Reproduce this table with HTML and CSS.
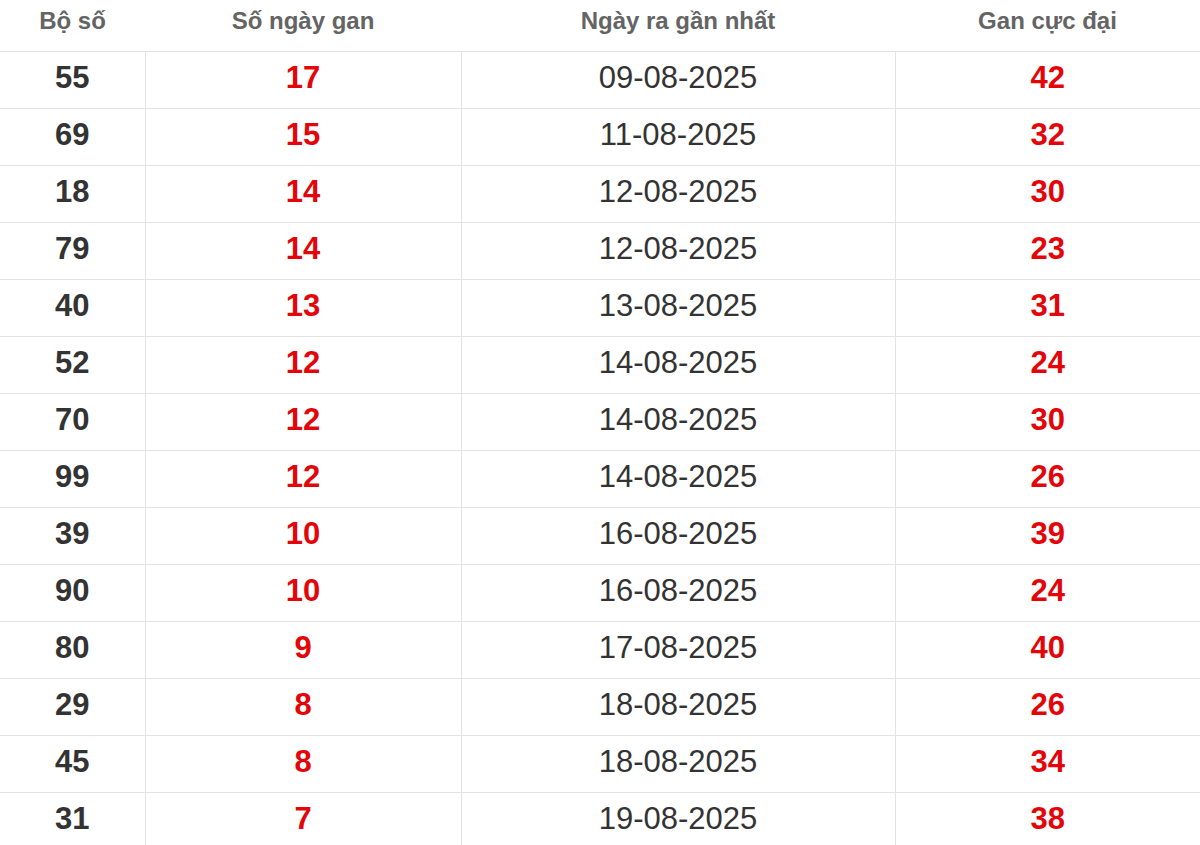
FILE: index.html
```html
<!DOCTYPE html>
<html lang="vi">
<head>
<meta charset="utf-8">
<link rel="stylesheet" href="styles.css">
</head>
<body>
<table class="gan-table">
  <colgroup>
    <col class="c1"><col class="c2"><col class="c3"><col class="c4">
  </colgroup>
  <thead>
    <tr><th>Bộ số</th><th>Số ngày gan</th><th>Ngày ra gần nhất</th><th>Gan cực đại</th></tr>
  </thead>
  <tbody>
    <tr><td class="num">55</td><td class="red">17</td><td class="date">09-08-2025</td><td class="red">42</td></tr>
    <tr><td class="num">69</td><td class="red">15</td><td class="date">11-08-2025</td><td class="red">32</td></tr>
    <tr><td class="num">18</td><td class="red">14</td><td class="date">12-08-2025</td><td class="red">30</td></tr>
    <tr><td class="num">79</td><td class="red">14</td><td class="date">12-08-2025</td><td class="red">23</td></tr>
    <tr><td class="num">40</td><td class="red">13</td><td class="date">13-08-2025</td><td class="red">31</td></tr>
    <tr><td class="num">52</td><td class="red">12</td><td class="date">14-08-2025</td><td class="red">24</td></tr>
    <tr><td class="num">70</td><td class="red">12</td><td class="date">14-08-2025</td><td class="red">30</td></tr>
    <tr><td class="num">99</td><td class="red">12</td><td class="date">14-08-2025</td><td class="red">26</td></tr>
    <tr><td class="num">39</td><td class="red">10</td><td class="date">16-08-2025</td><td class="red">39</td></tr>
    <tr><td class="num">90</td><td class="red">10</td><td class="date">16-08-2025</td><td class="red">24</td></tr>
    <tr><td class="num">80</td><td class="red">9</td><td class="date">17-08-2025</td><td class="red">40</td></tr>
    <tr><td class="num">29</td><td class="red">8</td><td class="date">18-08-2025</td><td class="red">26</td></tr>
    <tr><td class="num">45</td><td class="red">8</td><td class="date">18-08-2025</td><td class="red">34</td></tr>
    <tr><td class="num">31</td><td class="red">7</td><td class="date">19-08-2025</td><td class="red">38</td></tr>
  </tbody>
</table>
</body>
</html>
```

FILE: styles.css
```css
html, body {
  margin: 0;
  padding: 0;
  background: #fff;
}
body {
  font-family: "Liberation Sans", Arial, sans-serif;
  overflow: hidden;
}
.gan-table {
  width: 1200px;
  border-collapse: collapse;
  table-layout: fixed;
}
.c1 { width: 145px; }
.c2 { width: 316px; }
.c3 { width: 434px; }
.c4 { width: 305px; }
.gan-table th {
  height: 51px;
  padding: 0 0 8px;
  font-size: 24px;
  font-weight: bold;
  color: #646464;
  text-align: center;
  border-bottom: 1px solid #e3e3e3;
  box-sizing: border-box;
}
.gan-table td {
  height: 57px;
  box-sizing: border-box;
  padding: 0 0 3px;
  text-align: center;
  font-size: 31px;
  border-bottom: 1px solid #e3e3e3;
  border-left: 1px solid #e3e3e3;
}
.gan-table td:first-child { border-left: none; }
.num {
  font-weight: bold;
  color: #333;
}
.red {
  font-weight: bold;
  color: #e3050a;
}
.date {
  color: #333;
  font-size: 31.5px;
}
```
